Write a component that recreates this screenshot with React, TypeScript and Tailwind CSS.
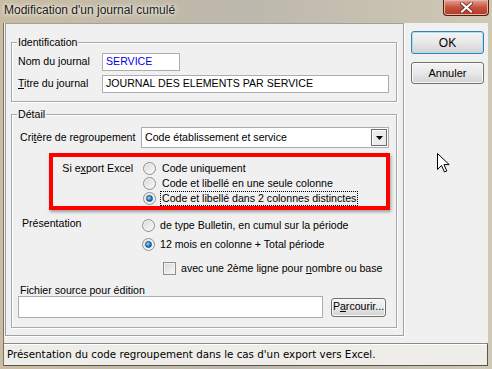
import React from 'react';

const ui = "font-['Liberation_Sans',Arial,sans-serif] text-[10.6px] text-black";

function Radio({ checked }: { checked?: boolean }) {
  return (
    <span className="w-[13px] h-[13px] shrink-0 rounded-full border border-[#8e8f8f] bg-gradient-to-br from-[#d8d8d8] to-[#fbfbfb] shadow-[inset_0_0_0_1px_#f2f2f2] flex items-center justify-center">
      {checked && (
        <span className="w-[7px] h-[7px] rounded-full border border-[#1b4f80] bg-[radial-gradient(circle_at_35%_35%,#9fdcff,#1c7fd0_55%,#0b4c8c)]" />
      )}
    </span>
  );
}

function RadioRow({ label, checked, focus }: { label: string; checked?: boolean; focus?: boolean }) {
  return (
    <div className="flex items-center h-[15px]">
      <Radio checked={checked} />
      <span className={`ml-[4px] px-[1px] leading-[13px] ${focus ? 'border border-dotted border-black' : 'border border-transparent'}`}>
        {label}
      </span>
    </div>
  );
}

function Group({ title, className, children }: { title: string; className: string; children: React.ReactNode }) {
  return (
    <div className={`relative border border-[#a9a9a9] shadow-[inset_1px_1px_0_#fff,1px_1px_0_#fff] ${className}`}>
      <span className="absolute -top-[7px] left-[5px] px-[1px] bg-[#f0f0f0] leading-[13px]">{title}</span>
      {children}
    </div>
  );
}

function WinButton({ label, def, className }: { label: React.ReactNode; def?: boolean; className: string }) {
  return (
    <div
      className={`flex items-center justify-center rounded-[3px] border bg-gradient-to-b from-[#f4f4f4] via-[#e8e8e8] to-[#d2d2d2] font-['Liberation_Sans',Arial,sans-serif] ${
        def ? 'border-[#3c7fb1] shadow-[inset_0_0_0_1px_#a6e1f7]' : 'border-[#707070] shadow-[inset_0_0_0_1px_#fafafa]'
      } ${className}`}
    >
      {label}
    </div>
  );
}

export default function App() {
  return (
    <div className="relative w-[492px] h-[369px] overflow-hidden flex flex-col bg-gradient-to-r from-[#c9bca2] via-[#bdb8ad] to-[#cfc8b4]">
      {/* title bar */}
      <div className="h-[23px] shrink-0 flex justify-between">
        <span className="pl-[4px] pt-[3px] text-[12px] leading-[15px] text-[#1a1a1a] font-['Liberation_Sans',Arial,sans-serif] [text-shadow:0_0_6px_#fff,0_0_3px_#f5f0e6]">
          Modification d'un journal cumulé
        </span>
        <div className="mr-[3px] w-[46px] h-[16px] rounded-b-[4px] border border-t-0 border-[#4e1d14] bg-gradient-to-b from-[#e0a094] via-[#c9503a] to-[#b23a22] shadow-[inset_0_0_0_1px_#e7b3a8] flex items-center justify-center">
          <svg width="13" height="11" viewBox="0 0 13 11">
            <path d="M2 1.5 L11 9.5 M11 1.5 L2 9.5" stroke="#5a1c12" strokeWidth="3.6" strokeLinecap="square" />
            <path d="M2 1.5 L11 9.5 M11 1.5 L2 9.5" stroke="#fff" strokeWidth="2.2" strokeLinecap="square" />
          </svg>
        </div>
      </div>

      {/* client */}
      <div className="flex-1 flex pl-[3px] pr-[4px] pb-[3px]">
        <div className="flex-1 flex flex-col bg-[#f0f0f0] border-l border-[#7a7466]">
          <div className="flex h-[320px]">
            {/* left panel */}
            <div className={`ml-[1px] w-[399px] h-[313px] border border-[#a0a0a0] shadow-[1px_1px_0_#fff] flex flex-col ${ui}`}>
              <Group title="Identification" className="mt-[18px] ml-[5px] w-[386px] h-[60px] shrink-0">
                <div className="mt-[10px] flex items-center h-[18px]">
                  <span className="pl-[6px] w-[90px]">Nom du journal</span>
                  <div className="w-[78px] h-[18px] bg-white border border-[#abadb3] flex items-center pl-[3px] text-[#0000ee]">SERVICE</div>
                </div>
                <div className="mt-[4px] flex items-center h-[18px]">
                  <span className="pl-[6px] w-[90px]">
                    <span className="underline">T</span>itre du journal
                  </span>
                  <div className="w-[287px] h-[18px] bg-white border border-[#abadb3] flex items-center pl-[3px]">
                    JOURNAL DES ELEMENTS PAR SERVICE
                  </div>
                </div>
              </Group>

              <Group title="Détail" className="mt-[12px] ml-[5px] w-[386px] h-[214px] shrink-0 flex flex-col">
                <div className="mt-[12px] flex items-center h-[21px]">
                  <span className="pl-[8px] w-[129px]">
                    Cri<span className="underline">t</span>ère de regroupement
                  </span>
                  <div className="w-[248px] h-[21px] bg-white border border-[#abadb3] flex items-center justify-between pl-[3px] pr-[1px]">
                    <span>Code établissement et service</span>
                    <div className="w-[16px] h-[17px] border border-[#6d6d6d] bg-[#ececec] shadow-[inset_1px_1px_0_#fff] flex items-center justify-center">
                      <svg width="7" height="4" viewBox="0 0 7 4">
                        <path d="M0 0 H7 L3.5 4 Z" fill="#000" />
                      </svg>
                    </div>
                  </div>
                </div>

                <div className="mt-[5px] ml-[37px] w-[341px] h-[57px] border-4 border-[#ff0000] shadow-[1px_2px_3px_rgba(0,0,0,0.35)] flex pt-[4px]">
                  <span className="w-[80px] text-right leading-[15px]">
                    Si e<span className="underline">x</span>port Excel
                  </span>
                  <div className="ml-[10px] flex flex-col">
                    <RadioRow label="Code uniquement" />
                    <RadioRow label="Code et libellé en une seule colonne" />
                    <RadioRow label="Code et libellé dans 2 colonnes distinctes" checked focus />
                  </div>
                </div>

                <div className="mt-[6px] flex">
                  <span className="pl-[10px] w-[130px] leading-[15px]">Présentation</span>
                  <div className="flex flex-col">
                    <div className="h-[19px] flex items-center">
                      <Radio />
                      <span className="ml-[5px]">de type Bulletin, en cumul sur la période</span>
                    </div>
                    <div className="h-[19px] flex items-center">
                      <Radio checked />
                      <span className="ml-[5px]">12 mois en colonne + Total période</span>
                    </div>
                    <div className="mt-[5px] h-[19px] flex items-center pl-[21px]">
                      <span className="w-[13px] h-[13px] border border-[#8e8f8f] bg-gradient-to-br from-[#d6d6d6] to-[#fbfbfb] shadow-[inset_0_0_0_1px_#f2f2f2]" />
                      <span className="ml-[5px]">
                        avec une 2ème ligne pour <span className="underline">n</span>ombre ou base
                      </span>
                    </div>
                  </div>
                </div>

                <span className="mt-[6px] pl-[8px] h-[12px] leading-[12px]">Fichier source pour édition</span>
                <div className="flex items-center">
                  <div className="ml-[6px] w-[305px] h-[22px] bg-white border border-[#abadb3]" />
                  <WinButton
                    label={
                      <span>
                        P<span className="underline">a</span>rcourir...
                      </span>
                    }
                    className="ml-[8px] w-[55px] h-[19px] text-[10.6px] rounded-[2px]"
                  />
                </div>
              </Group>
            </div>

            {/* right panel */}
            <div className="ml-[7px] pt-[8px] flex flex-col gap-[8px]">
              <WinButton label="OK" def className="w-[73px] h-[23px] text-[12px]" />
              <WinButton label="Annuler" className="w-[73px] h-[22px] text-[11px]" />
            </div>
          </div>

          {/* status bar */}
          <div className="flex-1 border-t border-[#8a8a8a] bg-[#efedea] shadow-[inset_0_1px_0_#fff] border-b border-r border-b-[#5a564e] border-r-[#5a564e] flex items-center pl-[3px] font-['DejaVu_Sans',Verdana,sans-serif] text-[10.3px] text-black">
            Présentation du code regroupement dans le cas d'un export vers Excel.
          </div>
        </div>
      </div>

      {/* mouse pointer */}
      <svg className="absolute left-[437px] top-[153px]" width="13" height="20" viewBox="0 0 13 20">
        <path d="M0.5 0.5 V16.5 L4.5 12.5 L7.5 19 L9.8 18 L7 11.6 H12.2 Z" fill="#fff" stroke="#000" strokeWidth="1" strokeLinejoin="miter" />
      </svg>
    </div>
  );
}
